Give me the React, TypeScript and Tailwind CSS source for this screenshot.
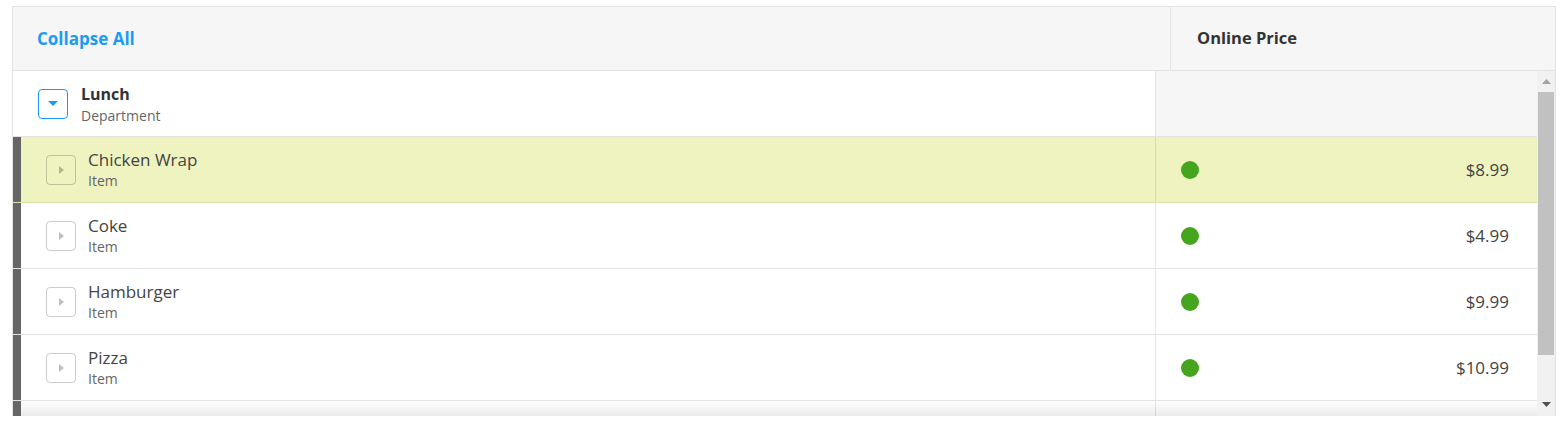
const items = [
  { name: 'Chicken Wrap', price: '$8.99', active: true },
  { name: 'Coke', price: '$4.99' },
  { name: 'Hamburger', price: '$9.99' },
  { name: 'Pizza', price: '$10.99' },
];

const ItemRow = ({ name, price, active }: { name: string; price: string; active?: boolean }) => (
  <div
    className={`flex h-[66px] border-b ${
      active ? 'bg-[#eef3c0] border-[#dde3a8]' : 'border-[#e3e3e3]'
    }`}
  >
    <div className="flex w-[1142px] items-center">
      <div className="h-full w-[8px] bg-[#666666]" />
      <div className="flex items-center pl-[25px] gap-[12px]">
        <div className="flex h-[30px] w-[30px] items-center justify-center rounded-[4px] border border-black/20">
          <svg width="5" height="8" viewBox="0 0 5 8">
            <path d="M0 0 L5 4 L0 8 Z" className="fill-black/25" />
          </svg>
        </div>
        <div className="flex flex-col leading-[21px]">
          <span className="text-[17px] text-[#444]">{name}</span>
          <span className="text-[14px] text-[#666]">Item</span>
        </div>
      </div>
    </div>
    <div className="flex flex-1 items-center justify-between border-l border-black/10 pl-[25px] pr-[28px]">
      <div className="h-[18px] w-[18px] rounded-full bg-[#46a51f]" />
      <span className="text-[17px] text-[#444]">{price}</span>
    </div>
  </div>
);

export default function App() {
  return (
    <div
      className="min-h-screen bg-white pl-[12px] pt-[6px]"
      style={{ fontFamily: '"Open Sans", "Noto Sans", sans-serif' }}
    >
      <div className="w-[1544px]">
        {/* header */}
        <div className="flex h-[65px] border border-[#e3e3e3] bg-[#f6f6f6]">
          <div className="flex w-[1157px] items-center pl-[24px]">
            <span className="text-[17px] font-bold text-[#1b9cf2]">Collapse All</span>
          </div>
          <div className="flex flex-1 items-center border-l border-[#e3e3e3] pl-[26px]">
            <span className="text-[16.5px] font-bold text-[#333]">Online Price</span>
          </div>
        </div>

        {/* body */}
        <div className="flex h-[345px] overflow-hidden border-l border-r border-[#e3e3e3]">
          <div className="flex w-[1524px] flex-col">
            <div className="flex h-[66px] shrink-0 border-b border-[#e3e3e3]">
              <div className="flex w-[1142px] items-center gap-[13px] pl-[25px]">
                <div className="flex h-[30px] w-[30px] items-center justify-center rounded-[4px] border border-[#1b9cf2]">
                  <svg width="10" height="5" viewBox="0 0 10 5">
                    <path d="M0 0 L10 0 L5 5 Z" fill="#1b9cf2" />
                  </svg>
                </div>
                <div className="flex flex-col pt-[2px] leading-[21px]">
                  <span className="text-[16px] font-bold text-[#333]">Lunch</span>
                  <span className="text-[14px] text-[#666]">Department</span>
                </div>
              </div>
              <div className="flex-1 border-l border-[#e3e3e3] bg-[#f6f6f6]" />
            </div>
            {items.map((it) => (
              <div key={it.name} className="shrink-0">
                <ItemRow name={it.name} price={it.price} active={it.active} />
              </div>
            ))}
            <div className="flex flex-1 bg-gradient-to-b from-white to-[#ebebeb]">
              <div className="w-[8px] bg-[#666666]" />
              <div className="w-[1134px]" />
              <div className="flex-1 border-l border-black/10" />
            </div>
          </div>

          {/* scrollbar */}
          <div className="flex w-[18px] flex-col items-center bg-[#f1f1f1]">
            <div className="flex h-[21px] items-center justify-center">
              <svg width="9" height="5" viewBox="0 0 9 5">
                <path d="M0 5 L4.5 0 L9 5 Z" fill="#a3a3a3" />
              </svg>
            </div>
            <div className="h-[263px] w-[16px] bg-[#c1c1c1]" />
            <div className="flex flex-1 items-end justify-center pb-[9px]">
              <svg width="9" height="5" viewBox="0 0 9 5">
                <path d="M0 0 L9 0 L4.5 5 Z" fill="#505050" />
              </svg>
            </div>
          </div>
        </div>
      </div>
    </div>
  );
}
